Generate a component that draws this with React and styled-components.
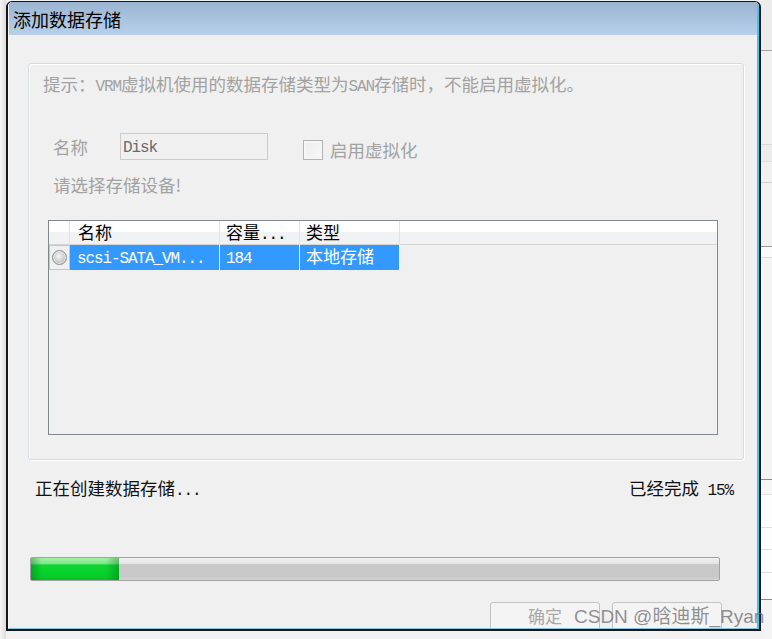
import styled, { createGlobalStyle } from "styled-components";

const GlobalStyle = createGlobalStyle`
  html, body {
    margin: 0;
    padding: 0;
  }
  body {
    width: 772px;
    height: 639px;
    overflow: hidden;
    background: #f2f2f2;
    font-family: "Noto Sans CJK SC", "Liberation Sans", sans-serif;
  }
`;

const Page = styled.div`
  position: relative;
  display: flex;
  align-items: flex-start;
  height: 639px;
  overflow: hidden;
`;

const LeftEdge = styled.div`
  flex: none;
  width: 6px;
  height: 639px;
  background: linear-gradient(to right, #f6f6f6, #dcdcdc);
`;

const RightEdge = styled.div`
  flex: 1;
  display: flex;
  flex-direction: column;
`;

const Stripe = styled.div`
  height: ${(p) => p.$h}px;
  background: ${(p) => p.$bg};
  border-bottom: 1px solid ${(p) => p.$line};
`;

const Window = styled.div`
  flex: none;
  width: 755px;
  height: 630px;
  margin-top: 1px;
  box-sizing: border-box;
  border: 1px solid #161616;
  border-left-width: 2px;
  border-right-width: 2px;
  border-bottom-width: 2px;
  border-radius: 6px 6px 0 0;
  overflow: hidden;
`;

const Frame = styled.div`
  height: 100%;
  box-sizing: border-box;
  display: flex;
  flex-direction: column;
  border-left: 1px solid #f7f7f7;
  border-right: 2px solid #3fc6ef;
  border-bottom: 1px solid #7cc4e8;
  background: #f0f0f0;
`;

const TitleBar = styled.div`
  flex: none;
  height: 33px;
  display: flex;
  align-items: center;
  padding: 1px 0 0 4px;
  box-sizing: border-box;
  background: linear-gradient(#9bb4d2, #b7d0ea);
  font-size: 18px;
  color: #000;
`;

const Body = styled.div`
  flex: 1;
  display: flex;
  flex-direction: column;
  padding: 28px 13px 0 19px;
  overflow: hidden;
`;

const GroupBox = styled.div`
  flex: none;
  height: 397px;
  box-sizing: border-box;
  border: 1px solid #d3dce3;
  border-radius: 3px;
  box-shadow: inset 1px 1px 0 #fff, 1px 1px 0 #fff;
  display: flex;
  flex-direction: column;
  align-items: flex-start;
`;

const Latin = styled.span`
  font-family: "Liberation Mono", monospace;
  font-size: 16px;
  letter-spacing: -1.1px;
  white-space: pre;
`;

const Muted = styled.div`
  font-size: 17.5px;
  line-height: 20px;
  color: #a2a2a2;
  margin: ${(p) => p.$m};
`;

const NameRow = styled.div`
  display: flex;
  align-items: flex-start;
  margin: 36px 0 0 24px;
`;

const Label = styled.div`
  width: 67px;
  font-size: 17.5px;
  line-height: 27px;
  color: #a2a2a2;
`;

const TextBox = styled.div`
  width: 148px;
  height: 27px;
  box-sizing: border-box;
  border: 1px solid #cbcbcb;
  background: #f0f0f0;
  padding: 0 0 0 2px;
  line-height: 22px;
  color: #6a6a6a;
`;

const CheckField = styled.label`
  display: flex;
  align-items: center;
  gap: 7px;
  margin: 7px 0 0 35px;
  font-size: 17.5px;
  line-height: 20px;
  color: #a2a2a2;
`;

const CheckBox = styled.span`
  width: 20px;
  height: 20px;
  box-sizing: border-box;
  border: 1px solid #b3b3b3;
  background: linear-gradient(135deg, #ececec, #f8f8f8);
  box-shadow: inset 0 0 0 2px #f5f5f5;
`;

const Table = styled.div`
  margin: 25px 0 0 19px;
  width: 670px;
  height: 215px;
  box-sizing: border-box;
  border: 1px solid #828790;
  background: #f0f0f0;
  display: flex;
  flex-direction: column;
`;

const Columns = `21px 150px 80px 100px 1fr`;

const HeaderRow = styled.div`
  display: grid;
  grid-template-columns: ${Columns};
  height: 24px;
  box-sizing: border-box;
  border-bottom: 1px solid #d5d5d5;
  background: linear-gradient(#fff 0, #fff 48%, #f1f2f4 50%, #f1f2f4 100%);
`;

const HeadCell = styled.div`
  border-right: ${(p) => (p.$last ? "none" : "1px solid #e3e4e8")};
  padding-left: ${(p) => p.$pad || 6}px;
  font-size: 17px;
  line-height: 22px;
  color: #000;
  white-space: nowrap;
`;

const DataRow = styled.div`
  display: grid;
  grid-template-columns: ${Columns};
  height: 22px;
`;

const RadioCell = styled.div`
  display: flex;
  align-items: center;
  justify-content: center;
  box-sizing: border-box;
  border: 1px solid #a9cdee;
`;

const Radio = styled.span`
  width: 15px;
  height: 15px;
  box-sizing: border-box;
  border-radius: 50%;
  border: 1px solid #8c8c8c;
  background: radial-gradient(circle at 45% 40%, #f6f6f6 0%, #d2d2d2 45%, #a4a4a4 100%);
  box-shadow: inset 0 0 0 1px #ededed;
`;

const Cell = styled.div`
  background: #3399ff;
  border-right: 1px solid #fff;
  padding-left: ${(p) => p.$pad || 6}px;
  font-size: 17px;
  line-height: 22px;
  color: #fff;
  white-space: nowrap;
`;

const StatusRow = styled.div`
  display: flex;
  justify-content: space-between;
  margin: 18px 11px 0 7px;
  font-size: 17.5px;
  line-height: 20px;
  color: #111;
`;

const Progress = styled.div`
  flex: none;
  margin: 56px 0 0 2px;
  width: 690px;
  height: 24px;
  box-sizing: border-box;
  border: 1px solid #a2a2a2;
  border-radius: 2px;
  background: linear-gradient(#f2f2f2 0, #e4e4e4 25%, #c9c9c9 30%, #c8c8c8 85%, #d4d4d4 100%);
  overflow: hidden;
`;

const Fill = styled.div`
  height: 100%;
  background:
    linear-gradient(to right, rgba(0, 90, 20, 0.35), transparent 12%, transparent 85%, rgba(0, 90, 20, 0.35)),
    linear-gradient(#a6f1a6 0, #7fe58a 25%, #10d531 32%, #04cf2a 80%, #09bf27 100%);
`;

const ButtonRow = styled.div`
  display: flex;
  justify-content: flex-end;
  gap: 12px;
  margin: 21px 22px 0 0;
`;

const Button = styled.div`
  flex: none;
  width: 110px;
  height: 34px;
  box-sizing: border-box;
  border: 1px solid #c2c2c2;
  border-radius: 3px;
  background: #f4f4f4;
  padding-top: 3px;
  text-align: center;
  font-size: 17px;
  line-height: 20px;
  color: #a8a8a8;
`;

const Watermark = styled.div`
  position: absolute;
  left: 574px;
  top: 607px;
  font-family: "Liberation Sans", "Noto Sans CJK SC", sans-serif;
  font-size: 19px;
  line-height: 20px;
  color: rgba(110, 110, 110, 0.75);
  white-space: nowrap;
`;

const stripes = [
  [50, "#ececec", "#a6a6a6"],
  [93, "#f0f0f0", "#d9d9d9"],
  [16, "#ececec", "#dedede"],
  [20, "#f0f0f0", "#cfcfcf"],
  [63, "#f2f2f2", "#9c9c9c"],
  [10, "#fafafa", "#dcdcdc"],
  [221, "#f4f4f4", "#8a8a8a"],
  [14, "#f6f6f6", "#e0e0e0"],
  [32, "#fdfdfd", "#dedede"],
  [21, "#fdfdfd", "#dedede"],
  [22, "#fdfdfd", "#dedede"],
  [26, "#fdfdfd", "#8a8a8a"],
  [38, "#f4f4f4", "#f4f4f4"],
];

const progress = { label: 15, fill: 12.8 };

export default function App() {
  return (
    <>
      <GlobalStyle />
      <Page>
        <LeftEdge />
        <Window>
          <Frame>
            <TitleBar>添加数据存储</TitleBar>
            <Body>
              <GroupBox>
                <Muted $m="10px 0 0 14px">
                  提示：<Latin>VRM</Latin>虚拟机使用的数据存储类型为<Latin>SAN</Latin>存储时，不能启用虚拟化。
                </Muted>
                <NameRow>
                  <Label>名称</Label>
                  <TextBox>
                    <Latin>Disk</Latin>
                  </TextBox>
                  <CheckField>
                    <CheckBox />
                    启用虚拟化
                  </CheckField>
                </NameRow>
                <Muted $m="15px 0 0 24px">请选择存储设备!</Muted>
                <Table>
                  <HeaderRow>
                    <HeadCell />
                    <HeadCell $pad={8}>名称</HeadCell>
                    <HeadCell>
                      容量<Latin>...</Latin>
                    </HeadCell>
                    <HeadCell>类型</HeadCell>
                    <HeadCell $last />
                  </HeaderRow>
                  <DataRow>
                    <RadioCell>
                      <Radio />
                    </RadioCell>
                    <Cell $pad={7}>
                      <Latin>scsi-SATA_VM...</Latin>
                    </Cell>
                    <Cell>
                      <Latin>184</Latin>
                    </Cell>
                    <Cell>本地存储</Cell>
                  </DataRow>
                </Table>
              </GroupBox>
              <StatusRow>
                <span>
                  正在创建数据存储<Latin>...</Latin>
                </span>
                <span>
                  已经完成<Latin>{` ${progress.label}%`}</Latin>
                </span>
              </StatusRow>
              <Progress>
                <Fill style={{ width: `${progress.fill}%` }} />
              </Progress>
              <ButtonRow>
                <Button>确定</Button>
                <Button />
              </ButtonRow>
            </Body>
          </Frame>
        </Window>
        <RightEdge>
          {stripes.map(([h, bg, line], i) => (
            <Stripe key={i} $h={h} $bg={bg} $line={line} />
          ))}
        </RightEdge>
        <Watermark>CSDN @晗迪斯_Ryan</Watermark>
      </Page>
    </>
  );
}
